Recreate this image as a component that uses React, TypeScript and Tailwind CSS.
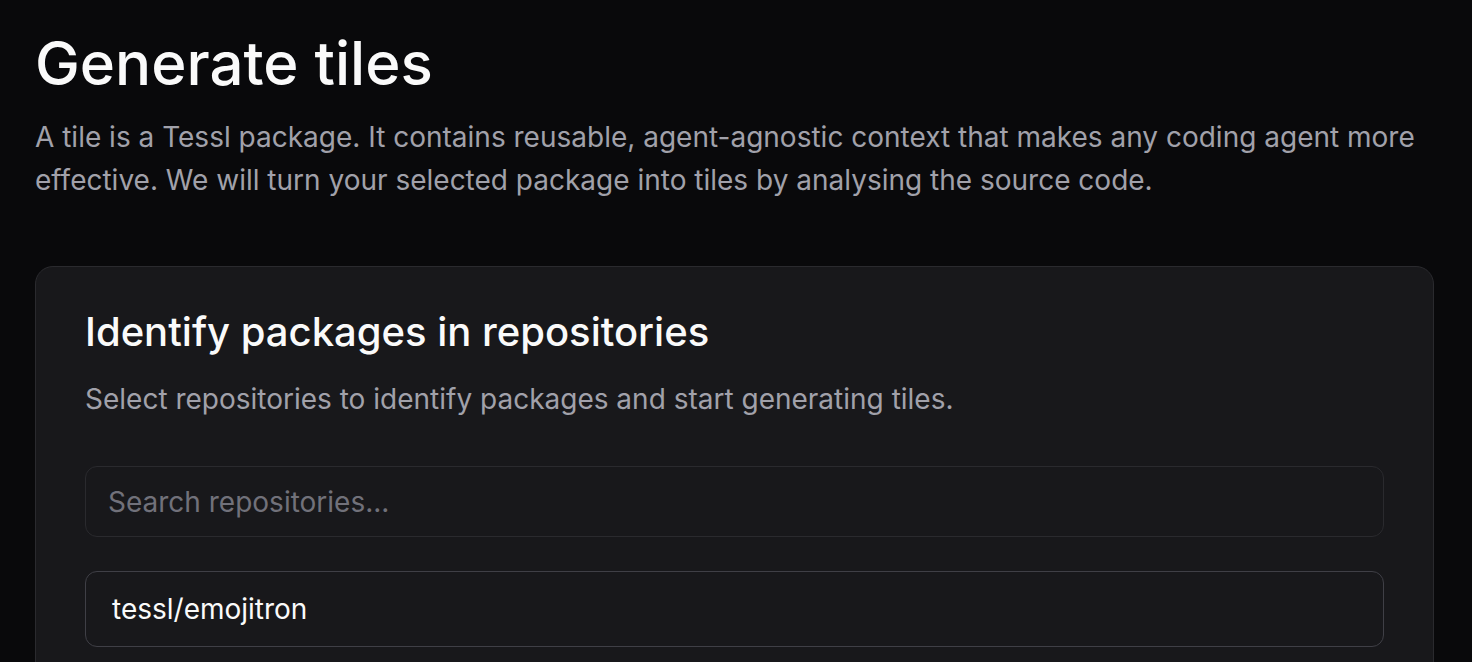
import React from "react";

// Page header plus the "identify packages" card.
function App() {
  return (
    <div
      className="min-h-screen w-full bg-[#09090b] px-[35px] pt-[33px] text-[#fafafa]"
      style={{ fontFamily: "Inter, 'Noto Sans', sans-serif" }}
    >
      <h1 className="text-[60px] leading-[60px] font-medium">Generate tiles</h1>
      <p className="mt-[23px] text-[28px] leading-[43px] text-[#a1a1aa]">
        A tile is a Tessl package. It contains reusable, agent-agnostic context that makes any coding agent more
        effective. We will turn your selected package into tiles by analysing the source code.
      </p>

      <div className="mt-[64px] w-[1399px] rounded-[18px] border border-[#2a2a2e] bg-[#18181b] px-[49px] pt-[41px] pb-[40px]">
        <h2 className="text-[40px] leading-[48px] font-medium">Identify packages in repositories</h2>
        <p className="mt-[23px] text-[28px] leading-[40px] text-[#a1a1aa]">
          Select repositories to identify packages and start generating tiles.
        </p>

        <div className="mt-[47px] flex flex-col gap-[34px]">
          <input
            className="h-[71px] w-full rounded-[12px] border border-[#2a2a2e] bg-[#18181b] px-[22px] text-[28px] text-[#fafafa] outline-none placeholder:text-[#71717a]"
            placeholder="Search repositories..."
          />
          <div className="flex h-[76px] items-center rounded-[12px] border-[1.5px] border-[#3f3f46] px-[26px] text-[28px]">
            tessl/emojitron
          </div>
        </div>
      </div>
    </div>
  );
}

export default App;
